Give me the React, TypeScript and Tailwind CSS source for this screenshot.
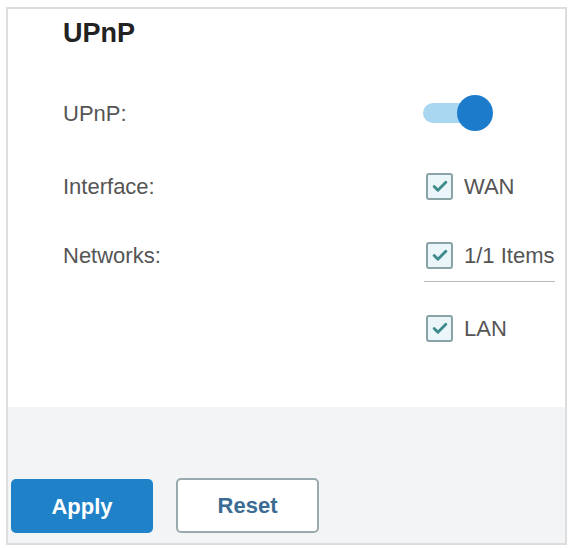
import React from 'react';

const font = { fontFamily: '"Liberation Sans", Arial, sans-serif' };

const Check = ({ label }: { label: string }) => (
  <div className="flex items-center gap-[11px] pl-[3px]">
    <span className="flex h-[27px] w-[27px] items-center justify-center rounded-[3px] border-2 border-[#8aa3a6] bg-[#eaf6fa]">
      <svg viewBox="0 0 24 24" className="h-[20px] w-[20px]" fill="none">
        <path
          d="M5 12.5l4.5 4.5L19 7.5"
          stroke="#3f8a8c"
          strokeWidth={3.4}
          strokeLinecap="round"
          strokeLinejoin="round"
        />
      </svg>
    </span>
    <span className="text-[22px] text-[#555]">{label}</span>
  </div>
);

const Toggle = () => (
  <div className="relative h-[36px] w-[70px]">
    <div className="absolute left-0 top-[8px] h-[20px] w-[60px] rounded-full bg-[#a9d6f1]" />
    <div className="absolute right-0 top-0 h-[36px] w-[36px] rounded-full bg-[#1c7ccb]" />
  </div>
);

export default function App() {
  return (
    <div className="min-h-[548px] bg-white pl-[6px] pt-[7px]" style={font}>
      <div className="flex h-[538px] w-[561px] flex-col border-2 border-[#dddddd]">
        <div className="h-[398px] pl-[55px]">
          <h1 className="mt-[8px] text-[27px] font-bold leading-[32px] text-[#222]">UPnP</h1>

          <div className="mt-[44px] flex h-[40px] items-center">
            <span className="w-[360px] text-[22px] text-[#555]">UPnP:</span>
            <Toggle />
          </div>

          <div className="mt-[33px] flex h-[40px] items-center">
            <span className="w-[360px] text-[22px] text-[#555]">Interface:</span>
            <Check label="WAN" />
          </div>

          <div className="mt-[29px] flex h-[40px] items-center">
            <span className="w-[360px] text-[22px] text-[#555]">Networks:</span>
            <Check label="1/1 Items" />
          </div>

          <div className="ml-[361px] mt-[6px] h-px w-[131px] bg-[#b8b8b8]" />

          <div className="mt-[26px] flex h-[40px] items-center">
            <span className="w-[360px]" />
            <Check label="LAN" />
          </div>
        </div>

        <div className="flex flex-1 items-end gap-[23px] bg-[#f2f4f6] pb-[10px] pl-[3px]">
          <button className="h-[54px] w-[142px] rounded-[5px] bg-[#1f82c8] text-[22px] font-bold text-white">
            Apply
          </button>
          <button className="h-[55px] w-[143px] rounded-[5px] border-2 border-[#9aa9ad] bg-white text-[22px] font-bold text-[#3b6c93]">
            Reset
          </button>
        </div>
      </div>
    </div>
  );
}
